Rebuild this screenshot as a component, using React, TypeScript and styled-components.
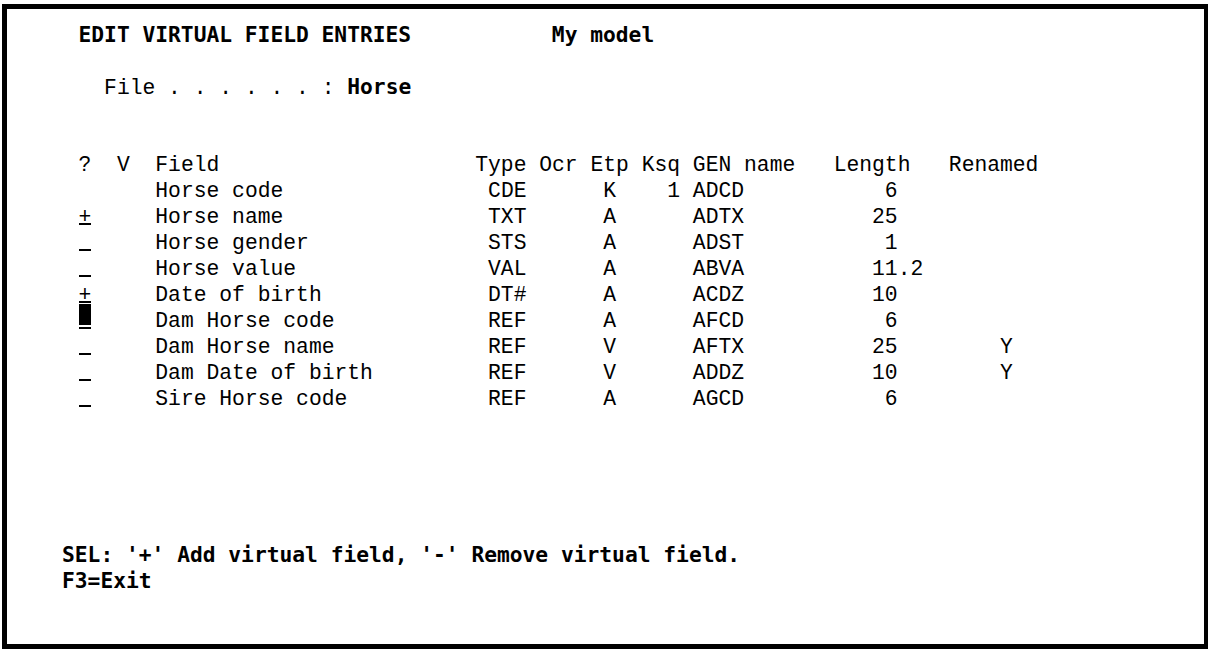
import styled, { createGlobalStyle } from "styled-components";

// 5250-style screen: every text line sits on a fixed character grid
const CW = 12.8;
const ROW = 26;
const COL0 = 71.5;

const GlobalStyle = createGlobalStyle`
  html, body {
    margin: 0;
    padding: 0;
    background: #ffffff;
  }
  body {
    width: 1211px;
    height: 653px;
    overflow: hidden;
  }
`;

const Screen = styled.div`
  box-sizing: border-box;
  width: 1206px;
  height: 645px;
  margin: 4px 0 0 2px;
  border-style: solid;
  border-color: #000;
  border-width: 5px 4px 5px 5px;
  padding-top: 13px;
  background: #fff;
  color: #000;
  font-family: "Liberation Mono", "DejaVu Sans Mono", monospace;
  font-size: 21.33px;
  display: flex;
  flex-direction: column;
`;

const Line = styled.div<{ $col?: number }>`
  flex: none;
  height: ${ROW}px;
  line-height: ${ROW}px;
  white-space: pre;
  padding-left: ${({ $col = 0 }) => COL0 + $col * CW}px;
`;

const FooterLine = styled(Line)`
  padding-left: 55px;
`;

const Gap = styled.div<{ $rows: number }>`
  flex: none;
  height: ${({ $rows }) => $rows * ROW}px;
`;

const Bold = styled.span`
  font-family: "DejaVu Sans Mono", "Liberation Mono", monospace;
  font-weight: bold;
  font-size: 21.26px;
`;

const SelCell = styled.span`
  position: relative;
  display: inline-block;
  box-sizing: border-box;
  width: ${CW}px;
  height: 21px;
  vertical-align: top;
  border-bottom: 2px solid #000;
  line-height: ${ROW}px;
  text-align: center;
`;

const Cursor = styled.span`
  position: absolute;
  left: 0;
  right: 0;
  top: -4px;
  height: 21px;
  background: #000;
`;

type Entry = {
  sel: "none" | "empty" | "plus" | "cursor";
  name: string;
  type: string;
  etp: string;
  ksq?: string;
  gen: string;
  len: string;
  lenCol: number;
  ren?: string;
};

const entries: Entry[] = [
  { sel: "none", name: "Horse code", type: "CDE", etp: "K", ksq: "1", gen: "ADCD", len: "6", lenCol: 63 },
  { sel: "plus", name: "Horse name", type: "TXT", etp: "A", gen: "ADTX", len: "25", lenCol: 62 },
  { sel: "empty", name: "Horse gender", type: "STS", etp: "A", gen: "ADST", len: "1", lenCol: 63 },
  { sel: "empty", name: "Horse value", type: "VAL", etp: "A", gen: "ABVA", len: "11.2", lenCol: 62 },
  { sel: "plus", name: "Date of birth", type: "DT#", etp: "A", gen: "ACDZ", len: "10", lenCol: 62 },
  { sel: "cursor", name: "Dam Horse code", type: "REF", etp: "A", gen: "AFCD", len: "6", lenCol: 63 },
  { sel: "empty", name: "Dam Horse name", type: "REF", etp: "V", gen: "AFTX", len: "25", lenCol: 62, ren: "Y" },
  { sel: "empty", name: "Dam Date of birth", type: "REF", etp: "V", gen: "ADDZ", len: "10", lenCol: 62, ren: "Y" },
  { sel: "empty", name: "Sire Horse code", type: "REF", etp: "A", gen: "AGCD", len: "6", lenCol: 63 },
];

// lay text pieces out at absolute screen columns, counted from `start`
const place = (parts: [number, string | undefined][], start: number) => {
  let s = "";
  for (const [col, text] of parts) {
    if (!text) continue;
    s = s.padEnd(col - start, " ") + text;
  }
  return s;
};

function EntryRow({ e }: { e: Entry }) {
  const rest = place(
    [
      [6, e.name],
      [32, e.type],
      [41, e.etp],
      [46, e.ksq],
      [48, e.gen],
      [e.lenCol, e.len],
      [72, e.ren],
    ],
    1
  );
  return (
    <Line>
      {e.sel === "none" ? (
        " "
      ) : (
        <SelCell>
          {e.sel === "plus" ? "+" : ""}
          {e.sel === "cursor" && <Cursor />}
        </SelCell>
      )}
      {rest}
    </Line>
  );
}

export default function App() {
  const title = place(
    [
      [0, "EDIT VIRTUAL FIELD ENTRIES"],
      [37, "My model"],
    ],
    0
  );
  const header = place(
    [
      [0, "?"],
      [3, "V"],
      [6, "Field"],
      [31, "Type Ocr Etp Ksq GEN name"],
      [59, "Length"],
      [68, "Renamed"],
    ],
    0
  );

  return (
    <>
      <GlobalStyle />
      <Screen>
        <Line>
          <Bold>{title}</Bold>
        </Line>
        <Gap $rows={1} />
        <Line $col={2}>
          {"File . . . . . . : "}
          <Bold>Horse</Bold>
        </Line>
        <Gap $rows={2} />
        <Line>{header}</Line>
        {entries.map((e) => (
          <EntryRow key={e.name} e={e} />
        ))}
        <Gap $rows={5} />
        <FooterLine>
          <Bold>SEL: '+' Add virtual field, '-' Remove virtual field.</Bold>
        </FooterLine>
        <FooterLine>
          <Bold>F3=Exit</Bold>
        </FooterLine>
      </Screen>
    </>
  );
}
